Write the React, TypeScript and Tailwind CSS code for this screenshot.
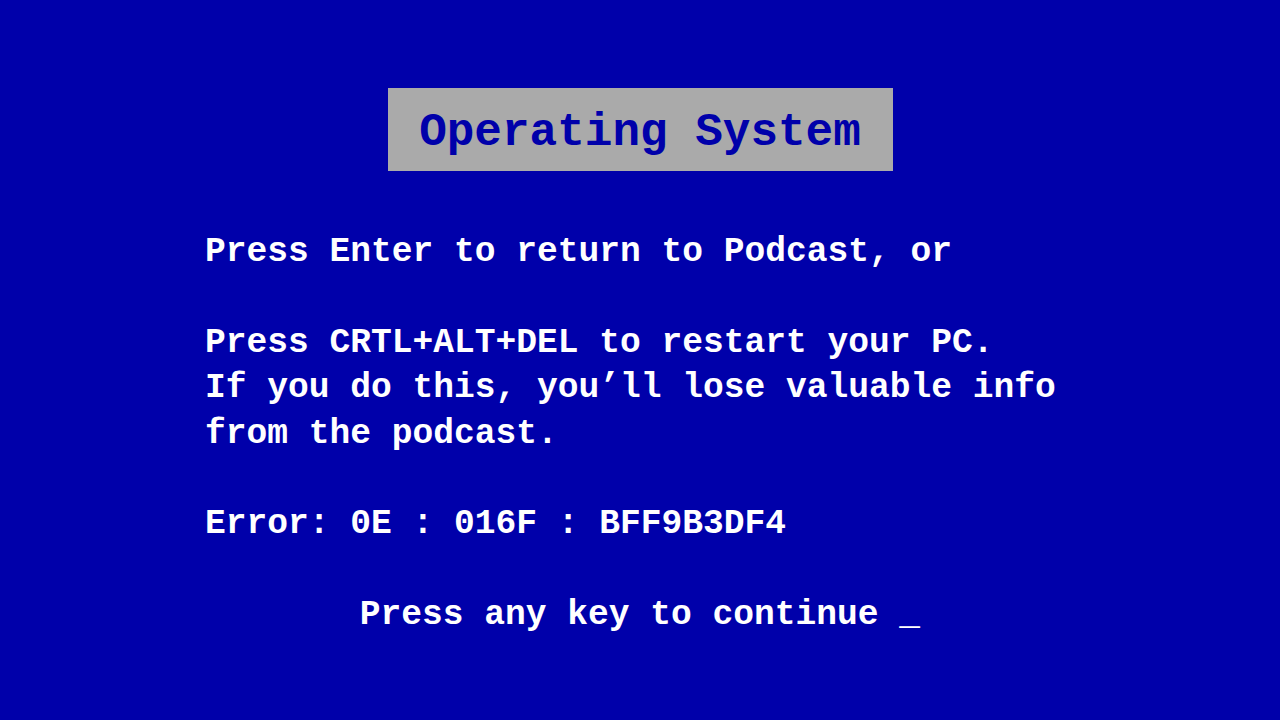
const lines = [
  "Press Enter to return to Podcast, or",
  "",
  "Press CRTL+ALT+DEL to restart your PC.",
  "If you do this, you’ll lose valuable info",
  "from the podcast.",
  "",
  "Error: 0E : 016F : BFF9B3DF4",
  "",
];

export default function App() {
  return (
    <div className="w-[1280px] h-[720px] overflow-hidden bg-[#0000aa] font-['Liberation_Mono','DejaVu_Sans_Mono',monospace] font-bold">
      <div className="flex flex-col pt-[88px]">
        <div className="mx-auto flex h-[83px] w-[505px] items-center justify-center bg-[#aaaaaa] pt-[7px] text-[46px] leading-none text-[#0000aa]">
          Operating System
        </div>
        <div className="mt-[58px] pl-[205px] text-[34.6px] leading-[45.4px] text-white whitespace-pre">
          {lines.map((line, i) => (
            <div key={i} className="h-[45.4px]">{line}</div>
          ))}
        </div>
        <div className="text-center text-[34.6px] leading-[45.4px] text-white whitespace-pre">
          Press any key to continue _
        </div>
      </div>
    </div>
  );
}
